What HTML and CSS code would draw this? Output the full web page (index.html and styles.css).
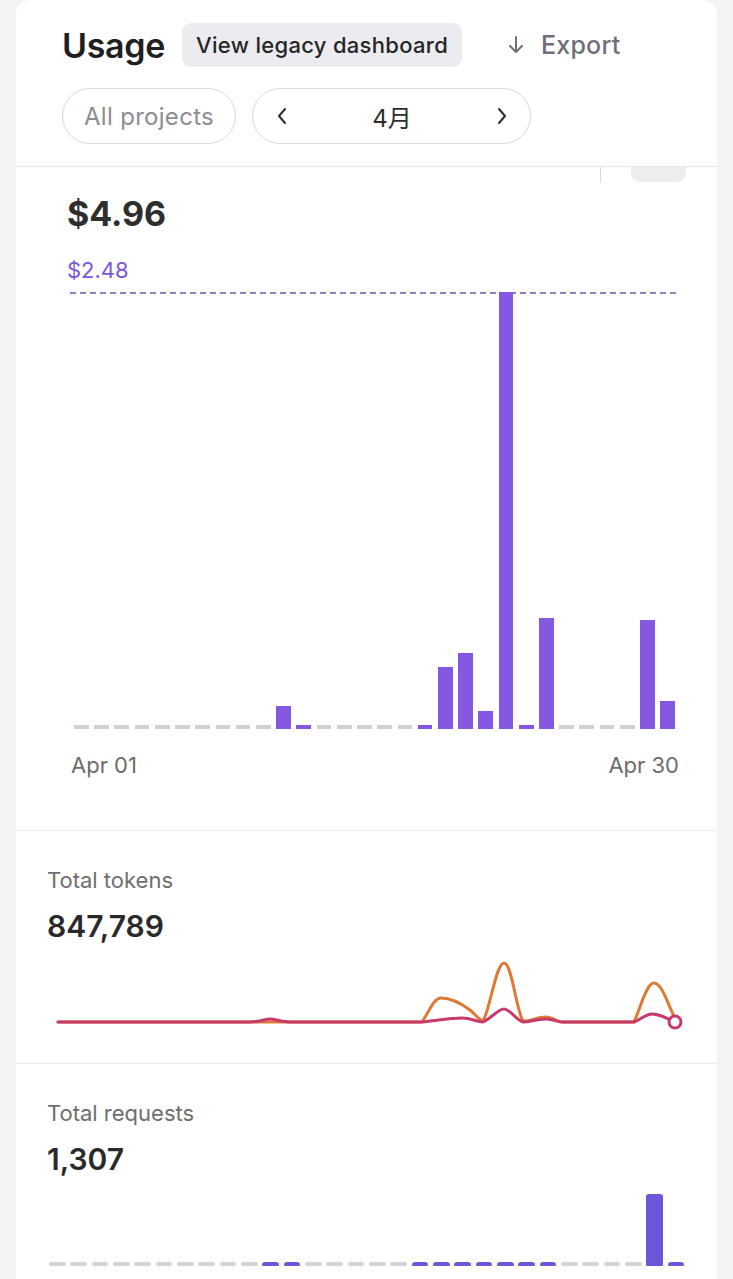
FILE: index.html
```html
<!DOCTYPE html>
<html>
<head>
    <title>Usage</title>
    <link rel="stylesheet" href="styles.css">
</head>
<body>
    <div class="card">
        <header class="usage-header">
            <div class="title-row">
                <h1>Usage</h1>
                <a class="legacy-btn" href="#">View legacy dashboard</a>
                <button class="export-btn" type="button">
                    <svg width="18" height="20" viewBox="0 0 18 20" fill="none" stroke="currentColor" stroke-width="2" stroke-linecap="round" stroke-linejoin="round">
                        <path d="M9 2v15M3 11l6 6 6-6"/>
                    </svg>
                    Export
                </button>
            </div>
            <div class="filter-row">
                <button class="pill project-pill" type="button">All projects</button>
                <div class="pill month-pill">
                    <button class="chevron" type="button">
                        <svg width="14" height="18" viewBox="0 0 14 18" fill="none" stroke="currentColor" stroke-width="2" stroke-linecap="round" stroke-linejoin="round"><path d="M10 2L4 9l6 7"/></svg>
                    </button>
                    <span class="month">4月</span>
                    <button class="chevron" type="button">
                        <svg width="14" height="18" viewBox="0 0 14 18" fill="none" stroke="currentColor" stroke-width="2" stroke-linecap="round" stroke-linejoin="round"><path d="M4 2l6 7-6 7"/></svg>
                    </button>
                </div>
            </div>
        </header>

        <div class="toolbar-clip">
            <div class="toolbar">
                <span class="toolbar-divider"></span>
                <span class="toolbar-btn"></span>
            </div>
        </div>

        <section class="spend">
            <div class="spend-total">$4.96</div>
            <div class="spend-max">$2.48</div>
            <div class="spend-chart">
                <div class="bars" id="spendBars"></div>
            </div>
            <div class="axis">
                <span>Apr 01</span>
                <span>Apr 30</span>
            </div>
        </section>

        <section class="metric">
            <div class="metric-label">Total tokens</div>
            <div class="metric-value">847,789</div>
            <svg class="token-chart" width="638" height="80" viewBox="0 0 638 80" fill="none" stroke-width="3" stroke-linecap="round" stroke-linejoin="round">
                <!-- output tokens -->
                <path stroke="#dd7b36" d="M11,67 L375,67 C383,55 387,43 394,43 C405,43 415,49 423,55 C429,60 432,65 436,66 C443,55 449,8 457,8 C465,8 469,55 476,66 C483,67 489,62 499,62 C507,62 509,67 515,67 L587,67 C593,55 599,28 607,28 C615,28 621,50 627,61"/>
                <!-- input tokens -->
                <path stroke="#c63b6c" d="M11,67 L203,67 C213,67 217,64 223,64 C229,64 233,67 243,67 L375,67 C393,65 403,63 415,63 C425,63 429,67 436,67 C445,63 451,54 457,54 C463,54 469,65 476,67 C483,67 489,64 499,64 C507,64 509,67 515,67 L587,67 C593,65 598,59 605,59 C613,59 619,63 628,67"/>
                <circle cx="628" cy="67" r="6" fill="#fff" stroke="#c63b6c"/>
            </svg>
        </section>

        <section class="metric">
            <div class="metric-label">Total requests</div>
            <div class="metric-value">1,307</div>
            <div class="mini-bars" id="requestBars"></div>
        </section>
    </div>

    <script>
        // daily spend in dollars, Apr 01 .. Apr 30
        const spend = [0,0,0,0,0,0,0,0,0,0, 0.13,0.02,0,0,0,0,0,0.02,0.35,0.43, 0.10,2.48,0.02,0.63,0,0,0,0,0.62,0.16];
        // daily request counts
        const requests = [0,0,0,0,0,0,0,0,0,0, 12,9,0,0,0,0,0,8,15,18, 11,20,9,14,0,0,0,0,1180,11];

        function drawBars(el, values, barClass) {
            const max = Math.max(...values);
            values.forEach(v => {
                const bar = document.createElement('div');
                bar.className = v > 0 ? barClass : barClass + ' empty';
                if (v > 0) bar.style.height = (v / max * 100) + '%';
                el.appendChild(bar);
            });
        }

        drawBars(document.getElementById('spendBars'), spend, 'bar');
        drawBars(document.getElementById('requestBars'), requests, 'mini-bar');
    </script>
</body>
</html>
```

FILE: styles.css
```css
body { margin: 0; background: #f4f4f4; font-family: Inter, "Noto Sans CJK JP", sans-serif; color: #2b2b2b; }
button { font-family: inherit; background: none; border: none; padding: 0; cursor: pointer; }

.card { margin: 0 16px; background: #fff; border-radius: 14px 14px 0 0; min-height: 1300px; }

/* header */
.usage-header { padding: 23px 31px 22px 46px; border-bottom: 1px solid #e6e6e6; }
.title-row { display: flex; align-items: center; height: 44px; }
.title-row h1 { margin: 0; font-size: 34px; font-weight: 600; letter-spacing: -0.3px; color: #1f1f1f; }
.legacy-btn { margin-left: 17px; height: 44px; padding: 0 14px; display: flex; align-items: center; background: #ececf0; border-radius: 9px; font-size: 22px; font-weight: 500; letter-spacing: 0.3px; color: #262626; text-decoration: none; }
.export-btn { margin-left: 45px; display: flex; align-items: center; gap: 16px; font-size: 25px; font-weight: 500; letter-spacing: 0.2px; color: #6f6f77; }
.filter-row { display: flex; gap: 16px; margin-top: 21px; }
.pill { height: 56px; box-sizing: border-box; border: 1.5px solid #d8d8dc; border-radius: 28px; display: flex; align-items: center; }
.project-pill { padding: 0 21px; font-size: 24px; letter-spacing: 0.3px; color: #8c8c92; }
.month-pill { width: 279px; padding: 0 21px 0 22px; justify-content: space-between; }
.chevron { color: #2d2d2d; display: flex; }
.month { font-size: 24px; color: #2d2d2d; }

/* toolbar clipped under header */
.toolbar-clip { height: 16px; overflow: hidden; }
.toolbar { display: flex; justify-content: flex-end; height: 40px; margin-top: -24px; padding-right: 31px; }
.toolbar-divider { width: 1px; background: #d9d9d9; }
.toolbar-btn { width: 55px; height: 36px; margin: 3px 0 0 30px; background: #ededf0; border-radius: 9px; }

/* spend chart */
.spend { padding: 11px 38px 51px 51px; }
.spend-total { font-size: 34px; line-height: 40px; font-weight: 700; color: #2e2e2e; }
.spend-max { margin-top: 22px; font-size: 22px; line-height: 28px; color: #7b57d9; }
.spend-chart { margin: 8px 0 0 3px; height: 437px; background: repeating-linear-gradient(90deg, #8a82bf 0 6px, transparent 6px 10px) top left / 100% 2px no-repeat; }
.bars { height: 100%; padding: 0 4px; display: flex; align-items: flex-end; gap: 5.5px; }
.bar { flex: 1; min-height: 3px; background: #8458e0; }
.bar.empty { height: 4px; background: #cfcfd7; }
.axis { margin: 22px 0 0 4px; display: flex; justify-content: space-between; font-size: 22px; line-height: 28px; color: #6c6c6c; }

/* metric cards */
.metric { border-top: 1px solid #ebebeb; padding: 35px 31px 28px; }
.metric-label { font-size: 22px; line-height: 28px; color: #6e6e6e; }
.metric-value { margin-top: 14px; font-size: 30px; line-height: 36px; font-weight: 600; color: #2a2a2a; }
.token-chart { display: block; margin-top: 11px; }
.mini-bars { margin: 17px 2px 0; height: 72px; display: flex; align-items: flex-end; gap: 4.7px; }
.mini-bar { flex: 1; min-height: 4px; background: #6f55d8; border-radius: 3px 3px 1px 1px; }
.mini-bar.empty { height: 4px; background: #d2d2d8; border-radius: 2px; }
```
